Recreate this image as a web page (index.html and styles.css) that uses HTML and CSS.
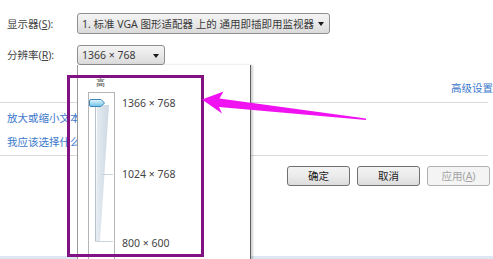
FILE: index.html
```html
<!DOCTYPE html>
<html lang="zh-CN">
<head>
<meta charset="utf-8">
<title>屏幕分辨率</title>
<link rel="stylesheet" href="styles.css">
</head>
<body>
<div class="dlg">
  <div class="row r1">
    <span class="lbl">显示器(<u>S</u>):</span>
    <div class="combo wide"><span class="ctext">1. 标准 VGA 图形适配器 上的 通用即插即用监视器</span><span class="caret"></span></div>
  </div>
  <div class="row r2">
    <span class="lbl">分辨率(<u>R</u>):</span>
    <div class="combo narrow"><span class="ctext">1366 × 768</span><span class="caret"></span></div>
  </div>
  <div class="adv"><a class="link">高级设置</a></div>
  <div class="sep"></div>
  <div class="links">
    <a class="link">放大或缩小文本和其他项目</a>
    <a class="link">我应该选择什么显示器设置?</a>
  </div>
  <div class="sep sep2"></div>
  <div class="btns">
    <button class="btn">确定</button>
    <button class="btn">取消</button>
    <button class="btn dis">应用(<u>A</u>)</button>
  </div>
  <div class="strip"></div>
</div>

<div class="popup">
  <div class="hi">高</div>
  <div class="pbody">
    <svg class="slider" width="27" height="170" viewBox="0 0 27 170">
      <defs>
        <linearGradient id="trk" x1="0" y1="0" x2="1" y2="0">
          <stop offset="0" stop-color="#e6ecf2"/>
          <stop offset="1" stop-color="#cdd8e2"/>
        </linearGradient>
        <linearGradient id="thm" x1="0" y1="0" x2="0" y2="1">
          <stop offset="0" stop-color="#e6f6fd"/>
          <stop offset="0.5" stop-color="#a9dcf4"/>
          <stop offset="1" stop-color="#6cbfe6"/>
        </linearGradient>
      </defs>
      <rect x="0.5" y="0.5" width="26" height="200" fill="none" stroke="#6a6a6a" stroke-dasharray="1 1"/>
      <polygon points="9,13 21,13 12,149 8,149" fill="url(#trk)"/>
      <line x1="7.5" y1="14" x2="7.5" y2="149.5" stroke="#b9c2ca"/>
      <line x1="7.5" y1="149.5" x2="25" y2="149.5" stroke="#cdd5dc"/>
      <line x1="13" y1="82.5" x2="25" y2="82.5" stroke="#cdd5dc"/>
      <path d="M3,7.5 H13 L16.5,11 L13,14.5 H3 Q1.5,14.5 1.5,13 V9 Q1.5,7.5 3,7.5 Z" fill="url(#thm)" stroke="#3e86b8"/>
    </svg>
    <div class="vals">
      <span class="val v1">1366 × 768</span>
      <span class="val v2">1024 × 768</span>
      <span class="val v3">800 × 600</span>
    </div>
  </div>
</div>

<div class="mark"></div>

<svg class="arrow" width="493" height="259" viewBox="0 0 493 259">
  <polygon points="202,99.5 223.5,91.5 219.5,98.5 366,118.5 366,120 219,107 222,113.5" fill="#f012f0"/>
</svg>
</body>
</html>
```

FILE: styles.css
```css
html, body {
  margin: 0;
  padding: 0;
}
body {
  width: 493px;
  height: 259px;
  overflow: hidden;
  position: relative;
  background: #ffffff;
  font-family: "Noto Sans", "Noto Sans CJK SC", sans-serif;
  font-size: 10.5px;
  color: #3a3a3a;
}
u {
  text-decoration: underline;
}
.dlg {
  display: flex;
  flex-direction: column;
  height: 259px;
}
.row {
  display: flex;
  align-items: center;
}
.r1 {
  margin-top: 13px;
}
.r2 {
  margin-top: 11px;
}
.lbl {
  width: 77px;
  flex: none;
  padding-left: 7px;
  box-sizing: border-box;
  color: #444444;
  line-height: 14px;
}
.combo {
  box-sizing: border-box;
  display: flex;
  align-items: center;
  justify-content: space-between;
  border: 1px solid #8e8f8f;
  border-radius: 3px;
  background: linear-gradient(#f4f4f4, #e9e9e9 50%, #dadada);
  padding: 0 5px 0 4px;
  color: #3a3a3a;
  white-space: nowrap;
}
.wide {
  width: 253px;
  height: 21px;
}
.narrow {
  width: 88px;
  height: 20px;
}
.ctext {
  line-height: 14px;
}
.caret {
  width: 0;
  height: 0;
  border-left: 3px solid transparent;
  border-right: 3px solid transparent;
  border-top: 4px solid #1a1a1a;
  margin-top: 1px;
}
.adv {
  margin-top: 16px;
  padding-left: 451px;
  white-space: nowrap;
  line-height: 14px;
  height: 14px;
}
.link {
  color: #3b78cc;
  line-height: 14px;
  white-space: nowrap;
}
.sep {
  margin-top: 7px;
  height: 1px;
  width: 488px;
  background: #d9d9d9;
}
.links {
  display: flex;
  flex-direction: column;
  gap: 10px;
  margin-top: 8px;
  padding-left: 7px;
}
.sep2 {
  margin-top: 6px;
}
.btns {
  display: flex;
  justify-content: flex-end;
  gap: 7px;
  padding-right: 3px;
  margin-top: 10px;
}
.btn {
  box-sizing: border-box;
  width: 63px;
  height: 20px;
  margin: 0;
  padding: 0;
  border: 1px solid #707070;
  border-radius: 3px;
  background: linear-gradient(#f3f3f3, #ebebeb 50%, #dcdcdc);
  font-family: "Noto Sans", "Noto Sans CJK SC", sans-serif;
  font-size: 10.5px;
  color: #222;
  line-height: 16px;
}
.btn.dis {
  border-color: #adb2b5;
  background: #f4f4f4;
  color: #a3a3a3;
}
.strip {
  margin-top: auto;
  height: 3px;
  background: #dce7f3;
}

/* dropdown list overlay */
.popup {
  position: absolute;
  left: 77px;
  top: 65px;
  width: 174px;
  height: 200px;
  box-sizing: border-box;
  background: #ffffff;
  border-left: 1px solid #9a9a9a;
  border-right: 1px solid #5f5f5f;
  box-shadow: 2px 0 2px rgba(0, 0, 0, 0.18);
}
.hi {
  margin-top: 12px;
  margin-left: 18px;
  height: 12px;
  line-height: 12px;
  font-size: 9px;
  color: #555;
}
.pbody {
  display: flex;
  margin-top: 3px;
}
.slider {
  margin-left: 10px;
  flex: none;
  display: block;
}
.vals {
  display: flex;
  flex-direction: column;
  padding-left: 7px;
}
.val {
  line-height: 14px;
  color: #444444;
  white-space: nowrap;
}
.v1 {
  margin-top: 4px;
}
.v2 {
  margin-top: 57px;
}
.v3 {
  margin-top: 55px;
}

/* annotation overlays */
.mark {
  position: absolute;
  left: 67px;
  top: 75px;
  width: 137px;
  height: 182px;
  box-sizing: border-box;
  border: 3px solid #801282;
}
.arrow {
  position: absolute;
  left: 0;
  top: 0;
}
```
